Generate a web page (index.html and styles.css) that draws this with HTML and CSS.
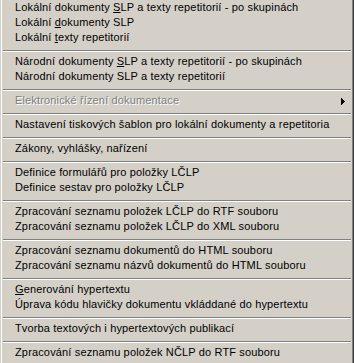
FILE: index.html
```html
<!DOCTYPE html>
<html lang="cs">
<head>
    <meta charset="UTF-8">
    <title>Menu</title>
    <link rel="stylesheet" href="styles.css">
</head>
<body>
    <div class="menu">
        <div class="item">Lokální dokumenty <u>S</u>LP a texty repetitorií - po skupinách</div>
        <div class="item">Lokální <u>d</u>okumenty SLP</div>
        <div class="item">Lokální <u>t</u>exty repetitorií</div>
        <div class="sep"></div>
        <div class="item">Národní dokumenty <u>S</u>LP a texty repetitorií - po skupinách</div>
        <div class="item">Národní dokumenty SLP a texty repetitorií</div>
        <div class="sep"></div>
        <div class="item disabled">
            <span>Elektronické řízení dokumentace</span>
            <svg class="arrow" width="4" height="7" viewBox="0 0 4 7">
                <rect x="0" y="0" width="1" height="7"/>
                <rect x="1" y="1" width="1" height="5"/>
                <rect x="2" y="2" width="1" height="3"/>
                <rect x="3" y="3" width="1" height="1"/>
            </svg>
        </div>
        <div class="sep"></div>
        <div class="item">Nastavení tiskových šablon pro lokální dokumenty a repetitoria</div>
        <div class="sep"></div>
        <div class="item">Zákony, vyhlášky, nařízení</div>
        <div class="sep"></div>
        <div class="item">Definice formulářů pro položky LČLP</div>
        <div class="item">Definice sestav pro položky LČLP</div>
        <div class="sep"></div>
        <div class="item">Zpracování seznamu položek LČLP do RTF souboru</div>
        <div class="item">Zpracování seznamu položek LČLP do XML souboru</div>
        <div class="sep"></div>
        <div class="item">Zpracování seznamu dokumentů do HTML souboru</div>
        <div class="item">Zpracování seznamu názvů dokumentů do HTML souboru</div>
        <div class="sep"></div>
        <div class="item"><u>G</u>enerování hypertextu</div>
        <div class="item">Úprava kódu hlavičky dokumentu vkláddané do hypertextu</div>
        <div class="sep"></div>
        <div class="item">Tvorba textových i hypertextových publikací</div>
        <div class="sep"></div>
        <div class="item">Zpracování seznamu položek NČLP do RTF souboru</div>
    </div>
</body>
</html>
```

FILE: styles.css
```css
body {
    margin: 0;
    background-color: #d4d0c8;
    overflow: hidden;
}
.menu {
    width: 354px;
    height: 363px;
    box-sizing: border-box;
    background-color: #d4d0c8;
    border-left: 1px solid #d4d0c8;
    border-right: 1px solid #404040;
    box-shadow: inset 1px 0 0 #fff, inset -1px 0 0 #808080;
    padding: 1px 2px 0 2px;
    overflow: hidden;
    font-family: "Liberation Sans", Arial, sans-serif;
    font-size: 11px;
    letter-spacing: 0.15px;
    color: #000;
}
.item {
    height: 15px;
    line-height: 13px;
    padding-left: 12px;
    padding-right: 6px;
    white-space: nowrap;
}
.item u {
    text-decoration: underline;
    text-underline-offset: 1px;
}
.disabled {
    display: flex;
    align-items: center;
    justify-content: space-between;
    color: #808080;
    text-shadow: 1px 1px 0 #fff;
}
.disabled span {
    align-self: flex-start;
}
.arrow {
    fill: #000;
    display: block;
}
.sep {
    height: 9px;
    box-sizing: border-box;
    padding-top: 4px;
}
.sep::before {
    content: "";
    display: block;
    height: 1px;
    background-color: #808080;
    border-bottom: 1px solid #fff;
}
```
